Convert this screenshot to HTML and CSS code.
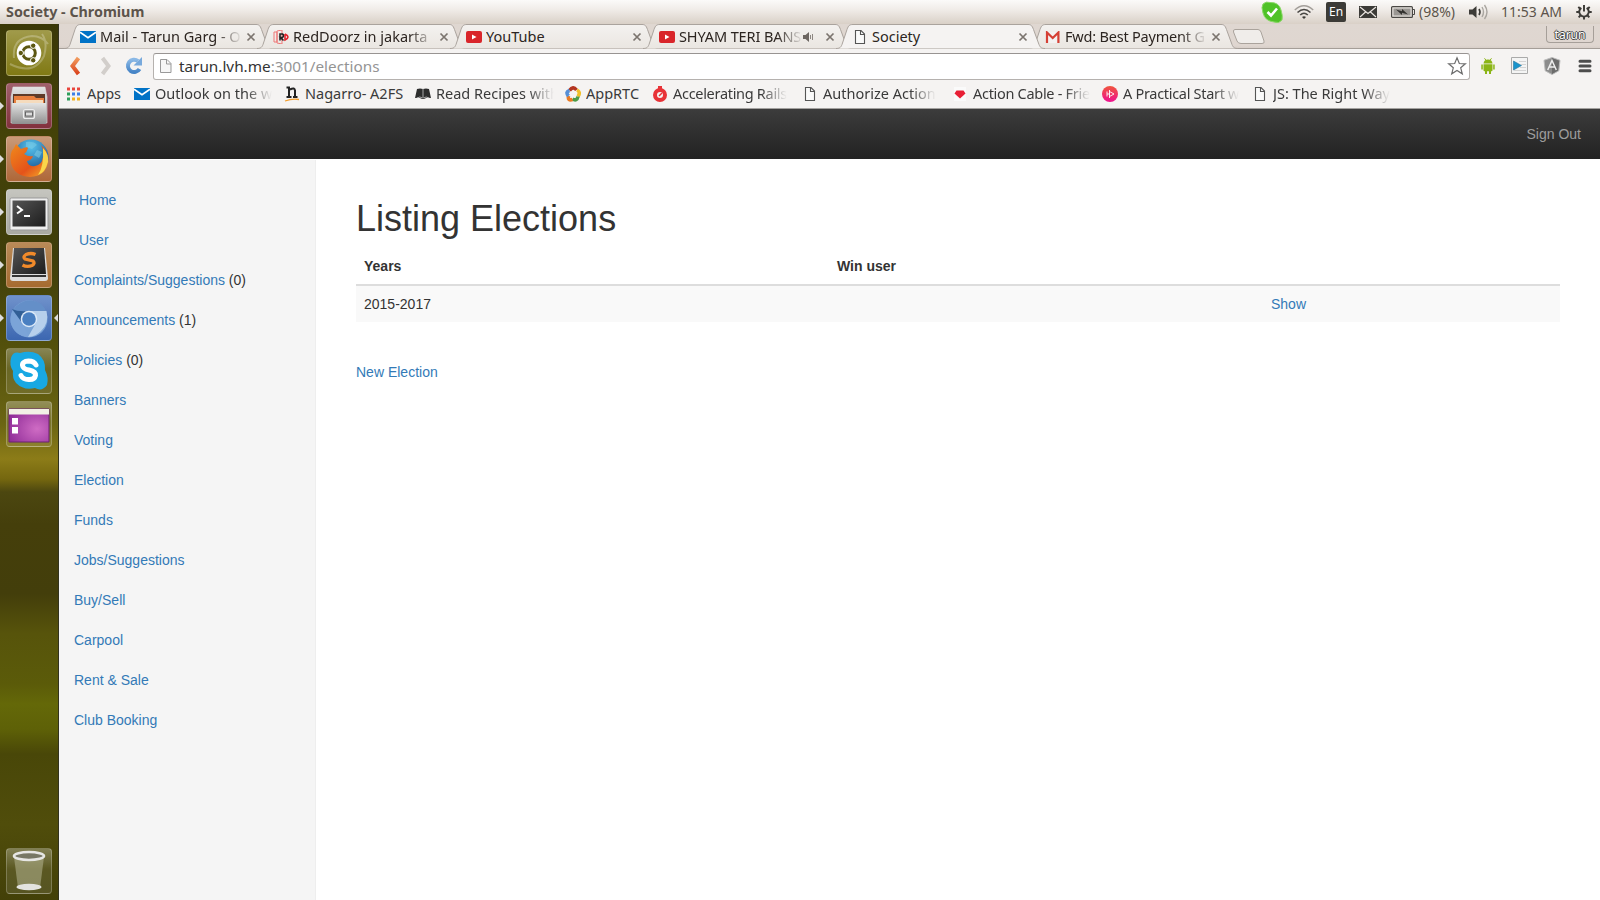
FILE: index.html
```html
<!DOCTYPE html>
<html lang="en">
<head>
<meta charset="utf-8">
<title>Society</title>
<link rel="stylesheet" href="styles.css">
</head>
<body>
<svg class="defs" width="0" height="0">
  <defs>
    <linearGradient id="tabFill" x1="0" y1="0" x2="0" y2="1"><stop offset="0" stop-color="#f4f2f0"/><stop offset="1" stop-color="#eae6e1"/></linearGradient>
    <linearGradient id="metal" x1="0" y1="0" x2="0" y2="1"><stop offset="0" stop-color="#e4e4e4"/><stop offset="1" stop-color="#8f8f8f"/></linearGradient>
    <linearGradient id="orangeArrow" x1="0" y1="0" x2="0" y2="1"><stop offset="0" stop-color="#f19a5e"/><stop offset="1" stop-color="#d9421b"/></linearGradient>
    <linearGradient id="blueArrow" x1="0" y1="0" x2="0" y2="1"><stop offset="0" stop-color="#8ab8e6"/><stop offset="1" stop-color="#4684c6"/></linearGradient>
    <linearGradient id="flame" x1="0" y1="0" x2="1" y2="1"><stop offset="0" stop-color="#f08a1c"/><stop offset=".6" stop-color="#e4531a"/><stop offset="1" stop-color="#f6b22b"/></linearGradient>
    <radialGradient id="globe" cx=".5" cy=".2" r=".8"><stop offset="0" stop-color="#58c3ec"/><stop offset="1" stop-color="#114a8c"/></radialGradient>
    <linearGradient id="screen" x1="0" y1="0" x2="1" y2="1"><stop offset="0" stop-color="#555"/><stop offset="1" stop-color="#1c1c1c"/></linearGradient>
    <radialGradient id="purple" cx=".7" cy=".6" r=".8"><stop offset="0" stop-color="#cf6cc4"/><stop offset="1" stop-color="#8d2a96"/></radialGradient>
    <linearGradient id="pink" x1="0" y1="0" x2="0" y2="1"><stop offset="0" stop-color="#f0553c"/><stop offset="1" stop-color="#ee1190"/></linearGradient>
    <symbol id="tab" viewBox="0 0 209 25"><path d="M0 24.5C4 24.5 5 23 6 20.5L11 5.500C12.500 1.500 13.500.5 17 .5H192C195 .5 196 1.500 197.500 5.500L203 20.500C204 23 205 24.500 209 24.500"/></symbol>
    <symbol id="x" viewBox="0 0 10 10"><path d="M1.500 1.500l7 7M8.500 1.500l-7 7" fill="none" stroke="#7b746e" stroke-width="1.700"/></symbol>
    <symbol id="page" viewBox="0 0 16 16"><path d="M3.500 1.500h5.500l3.500 3.500v9.500h-9z" fill="#fafafa" stroke="#555" stroke-width="1.100"/><path d="M8.500 1.500v4h4" fill="none" stroke="#555" stroke-width="1.100"/></symbol>
    <symbol id="mail" viewBox="0 0 16 12"><path d="M0 0h16v12H0z" fill="#0072c6"/><path d="M0 1.200l8 5.400 8-5.400" fill="none" stroke="#fff" stroke-width="1.700"/></symbol>
    <symbol id="yt" viewBox="0 0 16 12"><rect width="16" height="12" rx="2" fill="#d9252a"/><path d="M6 3.500l4.500 2.500L6 8.500z" fill="#fff"/></symbol>
  </defs>
</svg>

<header class="panel">
  <div class="panel-title">Society - Chromium</div>
  <div class="tray">
    <svg width="22" height="22" viewBox="0 0 22 22"><path d="M2 3Q5 0 9 1.500Q18 1 20 9Q22 15 21 19Q18 23 13 21Q4 20 2 12Q0 6 2 3z" fill="#4fc227" stroke="#8ad867"/><path d="M6.500 11l3.500 3.500 6-7" fill="none" stroke="#fff" stroke-width="2.600"/></svg>
    <svg width="20" height="16" viewBox="0 0 20 16" fill="none"><path d="M.8 6Q10-2.500 19.200 6" stroke="#a29e99" stroke-width="1.500"/><path d="M3.500 8.500Q10 2.500 16.500 8.500M6.200 11Q10 7.500 13.800 11" stroke="#4a4845" stroke-width="1.600"/><path d="M8 13Q10 11.400 12 13L10 15z" fill="#3c3b37"/></svg>
    <span class="lang">En</span>
    <svg width="18" height="12" viewBox="0 0 18 12"><path d="M0 0h18v12H0z" fill="#3c3b37"/><path d="M1 1l8 6.500L17 1M1 11l5.500-5M17 11l-5.500-5" fill="none" stroke="#eee9e4" stroke-width="1.100"/></svg>
    <svg width="24" height="12" viewBox="0 0 24 12"><rect x=".6" y=".6" width="20.800" height="10.800" rx="1" fill="#e8e4df" stroke="#4a4845" stroke-width="1.200"/><path d="M2.500 2.500h17v7h-17z" fill="#9a9793"/><path d="M22 3.500h1.500v5H22" fill="none" stroke="#4a4845"/><path d="M5 3.500l6 1.700V3l6 5.500-6-1.700v2.200z" fill="#32312e"/></svg>
    <span class="tray-text">(98%)</span>
    <svg width="20" height="16" viewBox="0 0 20 16"><path d="M0 5.500h3.500L7.500 2v12l-4-3.500H0z" fill="#3c3b37"/><path d="M10 5Q12 8 10 11" fill="none" stroke="#3c3b37" stroke-width="1.600"/><path d="M13 3Q16 8 13 13M15.500 1Q20.500 8 15.500 15" fill="none" stroke="#aaa6a0" stroke-width="1.400"/></svg>
    <span class="tray-text">11:53 AM</span>
    <svg width="16" height="18" viewBox="0 0 18 18" fill="none" stroke="#3c3b37"><path d="M6 4.300A5.400 5.400 0 1 0 12 4.300" stroke-width="2.200"/><path d="M9 1v7.500" stroke-width="2.200"/><path d="M2.600 3.300l2 2M15.400 3.300l-2 2M.3 9h3M14.700 9h3M3 15l2-2M15 15l-2-2M9 14.500v3" stroke-width="2.200"/></svg>
  </div>
</header>

<div class="desktop">
  <nav class="launcher">
    <div class="tile t-dash"><svg viewBox="0 0 46 46"><path d="M4 34Q28 46 38 26Q42 12 36 4M8 28Q6 8 26 6Q36 6 42 14" fill="none" stroke="#fff" stroke-opacity=".25" stroke-width="2"/><circle cx="23" cy="23" r="12.300" fill="#fff"/><circle cx="23" cy="23" r="6.300" fill="none" stroke="#5c5712" stroke-width="3"/><g fill="#5c5712" stroke="#fff" stroke-width="1"><circle cx="14.800" cy="23" r="2.700"/><circle cx="27.200" cy="15.700" r="2.700"/><circle cx="27.200" cy="30.300" r="2.700"/></g></svg></div>
    <div class="tile t-files running"><svg viewBox="0 0 46 46"><path d="M7 4h32l2 10v26H5V14z" fill="url(#metal)" stroke="#ddd" stroke-width=".6"/><path d="M7 11h32v9H7z" fill="#5e3a28"/><path d="M8 13h20l2 2h8v6H8z" fill="#e87f3e"/><path d="M10 17h27v4H10z" fill="#f5dbbd"/><path d="M6 20h34v21H6z" fill="url(#metal)"/><rect x="17.500" y="26.500" width="11" height="9" rx="2" fill="#aaa" stroke="#eee" stroke-width="1.200"/><rect x="19.500" y="29" width="7" height="4" fill="#ddd" stroke="#666"/></svg></div>
    <div class="tile t-firefox running"><svg viewBox="0 0 46 46"><circle cx="25" cy="21" r="17.500" fill="url(#globe)"/><path d="M20 6Q28 5 31 9L26 13L20 11zM31 14l5 2-3 6-5-3z" fill="#79c9e5" opacity=".6"/><path d="M10 8L15 13Q21 10 22 12Q21 16 18 18Q22 21 27 20Q26 24 21 25Q22 31 29 30Q36 29 37 21Q38 14 35 9Q43 15 42 26Q40 40 24 41Q8 40 5 27Q3 17 8 12z" fill="url(#flame)"/><path d="M37 12Q43 18 42 26Q39 37 32 39Q38 31 37 12" fill="#f9d54b"/></svg></div>
    <div class="tile t-term running"><svg viewBox="0 0 46 46"><rect x="4" y="9" width="38" height="32" rx="1.500" fill="#eee" stroke="#999"/><path d="M6.500 11.500h33v26h-33z" fill="url(#screen)"/><path d="M11 17l5 4-5 3.500M18 27h6" fill="none" stroke="#fff" stroke-width="2"/></svg></div>
    <div class="tile t-sublime running"><svg viewBox="0 0 46 46"><path d="M7 6h32l3 30q0 3-3 3H7q-3 0-3-3z" fill="#ddd"/><path d="M8 6h30l2 26H6z" fill="url(#screen)"/><path d="M6 33h34v2H6z" fill="#333"/><path d="M29.500 12.500Q25 10.500 20 12.500Q16.500 15 19 17L27 19Q29.500 21.500 26 23.500Q21 25.500 16.500 23" fill="none" stroke="#f18a2a" stroke-width="3.300"/></svg></div>
    <div class="tile t-chromium running active"><svg viewBox="0 0 46 46"><circle cx="23" cy="24" r="18.500" fill="#79a3d6"/><path d="M23 24L7 15Q14 5 25 5.500Q36 6 40.500 17H23z" fill="#648fc8"/><path d="M7 15L17 29L23 42Q8 41 4.500 27Q4 20 7 15z" fill="#7ba4d8"/><path d="M23 16h17.500q3 12-5.500 20-5 5.500-13 6L30.500 27z" fill="#b7d0ec"/><path d="M6 14l9.500 13 1-7 6-4Q12 17 6 14" fill="#315f96"/><circle cx="23" cy="24" r="8.300" fill="#dce9f7"/><circle cx="23" cy="24" r="6.800" fill="#497fc1"/></svg></div>
    <div class="tile t-glass"><svg viewBox="0 0 46 46"><path d="M5 10Q7 3 14 5Q24 2 32 6Q40 12 39 22Q43 30 41 37Q36 44 29 40Q18 43 10 35Q6 30 7 23Q3 17 5 10z" fill="#18a8e3"/><path d="M30 17Q28 13 22.500 13Q16 13.500 16.500 17.500Q17 21 23 22Q30 23.500 29.500 27.500Q28.500 32 22.500 31.500Q17 31.500 15 27.500" fill="none" stroke="#fff" stroke-width="5" stroke-linecap="round"/></svg></div>
    <div class="tile t-glass"><svg viewBox="0 0 46 46"><path d="M3 8h40v33H3z" fill="url(#purple)" stroke="#6a2370"/><path d="M3 8h40v5.500H3z" fill="#f2f0e6"/><path d="M6 17h6v6.500H6zM6 26h6v6.500H6z" fill="#fff"/></svg></div>
    <div class="tile t-glass trash"><svg viewBox="0 0 46 46"><path d="M8 9h30l-4 31q-11 4-22 0z" fill="#b5b591" fill-opacity=".55"/><ellipse cx="23" cy="39" rx="12.500" ry="3.200" fill="#e3e3e0"/><ellipse cx="23" cy="8" rx="15" ry="4" fill="#777765" stroke="#e6e6e3" stroke-width="2.600"/></svg></div>
  </nav>

  <div class="browser">
    <div class="tabstrip">
      <div class="tab"><svg class="shape"><use href="#tab"/></svg><svg class="fav" width="16" height="12"><use href="#mail"/></svg><span class="label fade">Mail - Tarun Garg - O</span><svg class="close"><use href="#x"/></svg></div>
      <div class="tab"><svg class="shape"><use href="#tab"/></svg><svg class="fav" width="16" height="14" viewBox="0 0 16 14"><path d="M1 2h3v10H1zM4 1l5-1v14l-5-1z" fill="none" stroke="#ee7777"/><path d="M7 10.500V4h2.500q2 1.500 0 3.500H7.500L10.500 10.500" fill="none" stroke="#222" stroke-width="1.600"/><path d="M12 4v6q6-3 0-6" fill="none" stroke="#e3202a" stroke-width="1.600"/></svg><span class="label fade">RedDoorz in jakarta</span><svg class="close"><use href="#x"/></svg></div>
      <div class="tab"><svg class="shape"><use href="#tab"/></svg><svg class="fav" width="16" height="12"><use href="#yt"/></svg><span class="label">YouTube</span><svg class="close"><use href="#x"/></svg></div>
      <div class="tab"><svg class="shape"><use href="#tab"/></svg><svg class="fav" width="16" height="12"><use href="#yt"/></svg><span class="label fade tight">SHYAM TERI BANS</span><svg class="audio" width="11" height="10" viewBox="0 0 11 10"><path d="M0 3h2.500L6 0v10L2.500 7H0z" fill="#6d6762"/><path d="M7.500 3v4M9.500 2v6" stroke="#8d8782"/></svg><svg class="close"><use href="#x"/></svg></div>
      <div class="tab current"><svg class="shape"><use href="#tab"/></svg><svg class="fav" width="16" height="16"><use href="#page"/></svg><span class="label">Society</span><svg class="close"><use href="#x"/></svg></div>
      <div class="tab"><svg class="shape"><use href="#tab"/></svg><svg class="fav" width="16" height="12" viewBox="0 0 16 12"><path d="M1 1h13v11H1z" fill="#f4f2f2"/><path d="M2 12V1.500l5.700 5.500L13.400 1.500V12" fill="none" stroke="#d54035" stroke-width="2.200"/></svg><span class="label fade gmail">Fwd: Best Payment G</span><svg class="close"><use href="#x"/></svg></div>
      <svg class="newtab" width="34" height="18" viewBox="0 0 34 18"><path d="M3 1.500H26Q28 1.500 29 4L32 13Q33 15.500 30 15.500H9Q6 15.500 5 13L1.500 4Q1 1.500 3 1.500z" fill="#f0edea" stroke="#aaa39c"/></svg>
      <div class="profile">tarun</div>
    </div>

    <div class="toolbar">
      <svg width="12" height="20" viewBox="0 0 12 20"><path d="M9.500 2L3.500 10l6 8" fill="none" stroke="url(#orangeArrow)" stroke-width="4"/></svg>
      <svg class="forward" width="12" height="20" viewBox="0 0 12 20"><path d="M2.500 2L8.500 10l-6 8" fill="none" stroke="#d2cecb" stroke-width="4"/></svg>
      <svg class="reload" width="20" height="20" viewBox="0 0 20 20"><path d="M14 5A6.200 6.200 0 1 0 15.500 13" fill="none" stroke="url(#blueArrow)" stroke-width="4"/><path d="M18 1v8.500H9.500z" fill="#78a9dc"/></svg>
      <div class="omnibox">
        <svg width="14" height="16" viewBox="0 0 14 16"><path d="M1.500 1.500h6.500l4 4v9h-10.500z" fill="#f6f6f6" stroke="#999"/><path d="M7.500 1.500v4.500H12" fill="none" stroke="#999"/></svg>
        <span class="url">tarun.lvh.me<span class="path">:3001/elections</span></span>
        <svg class="star" width="20" height="20" viewBox="0 0 20 20"><path d="M10 1.800l2.300 5.700 6.100.3-4.700 4 1.600 6-5.300-3.400-5.300 3.400 1.600-6-4.700-4 6.100-.3z" fill="#fff" stroke="#6d6d6d" stroke-width="1.200"/></svg>
      </div>
      <div class="extensions">
        <svg width="14" height="16" viewBox="0 0 14 16" fill="#8bb516"><path d="M2.500 5.500Q3 1.500 7 1.500T11.500 5.500zM2.500 6.200h9v6q0 1-1 1h-7q-1 0-1-1z"/><path d="M.3 6.500h1.500v5H.3zM12.200 6.500h1.500v5h-1.500zM4 12h2v4H4zM8 12h2v4H8z"/><path d="M3.500.3l1.500 2M10.500.3L9 2.300" stroke="#8bb516"/></svg>
        <svg width="17" height="17" viewBox="0 0 17 17"><path d="M.5.5h16v16H.5z" fill="#f4f4f4" stroke="#aaa"/><path d="M8 4.500h7M10 7.500h5M9 10.500h6M3 13.500h12" stroke="#d4d4d4"/><path d="M2.500 4l8 4.500-8 4.500z" fill="#1994cc" stroke="#26739b" stroke-width=".6"/></svg>
        <svg width="18" height="18" viewBox="0 0 18 18"><path d="M9 .5l8 2.800-1.200 10.500L9 17.500l-6.800-3.700L1 3.300z" fill="#8c8c8c" stroke="#bbb"/><path d="M9 1v16l6-3.500 1.200-9.800z" fill="#6c6c6c"/><path d="M4.700 13L9 3.500l4.300 9.500M6.500 10h5" fill="none" stroke="#eee" stroke-width="1.500"/></svg>
        <svg width="14" height="14" viewBox="0 0 14 14"><path d="M2 2.200h10M2 7h10M2 11.800h10" stroke="#4d4d4d" stroke-width="3" stroke-linecap="round"/></svg>
      </div>
    </div>

    <div class="bookmarks">
      <div class="bm"><svg viewBox="0 0 16 16"><path d="M1 1.500h3v3H1zM6 1.500h3v3H6zM11 1.500h3v3h-3z" fill="#e8453c"/><path d="M1 6.500h3v3H1zM1 11.500h3v3H1z" fill="#2f9e5b"/><path d="M6 6.500h3v3H6zM11 6.500h3v3h-3z" fill="#3c7fe6"/><path d="M6 11.500h3v3H6zM11 11.500h3v3h-3z" fill="#f2b01e"/></svg><span>Apps</span></div>
      <div class="bm"><svg viewBox="0 -2 16 16"><use href="#mail" width="16" height="12"/></svg><span class="fade">Outlook on the w</span></div>
      <div class="bm"><svg viewBox="0 0 16 16"><path d="M2.500 1.500H5v9M6 3.500Q11 .8 11 5v5.500M2.500 11h5M9 11h4.500" fill="none" stroke="#222" stroke-width="2"/><path d="M4 1h2v10H4zM10 4h2v7h-2z" fill="#222"/><path d="M1 15Q8 12.500 15 13.500" fill="none" stroke="#f29c2b" stroke-width="1.300"/></svg><span>Nagarro- A2FS</span></div>
      <div class="bm"><svg viewBox="0 0 16 16"><path d="M2 3q3-1 6 0 3-1 6 0l2 9q-4-1-7 1H7Q4 11 0 12z" fill="#2d2d2d"/><path d="M8 3v9M2 12Q5 10 7.500 12M14 12q-3-2-5.500 0" fill="none" stroke="#ddd" stroke-width=".7"/></svg><span class="fade">Read Recipes with</span></div>
      <div class="bm"><svg viewBox="0 0 16 16" fill="none" stroke-width="3.600"><path d="M4.500 4.500Q8-.5 11.500 4" stroke="#b3341f"/><path d="M12 4Q16 6 13 10.500" stroke="#f1bf29"/><path d="M13 10.500Q12 15.500 7.500 13" stroke="#4c9b45"/><path d="M7.500 13.500Q2.500 15 3.500 10" stroke="#eb7b21"/><path d="M3.500 10Q0 6 4.500 4.500" stroke="#568fd5"/></svg><span>AppRTC</span></div>
      <div class="bm"><svg viewBox="0 0 16 16"><circle cx="8" cy="9" r="5" fill="none" stroke="#e83237" stroke-width="4"/><path d="M6 0h4v3H6z" fill="#e83237"/><path d="M7 10l3-3" stroke="#e83237" stroke-width="1.500"/></svg><span class="fade snug">Accelerating Rails</span></div>
      <div class="bm"><svg><use href="#page"/></svg><span class="fade">Authorize Action</span></div>
      <div class="bm"><svg viewBox="0 0 16 16"><path d="M2 1h12v14H2z" fill="#fafafa"/><path d="M4.500 4.500h7L13.500 7.500 8 12.500 2.500 7.500z" fill="#e81f35"/></svg><span class="fade snug">Action Cable - Frie</span></div>
      <div class="bm"><svg viewBox="0 0 16 16"><circle cx="8" cy="8" r="8" fill="url(#pink)"/><path d="M5 5.500v5M7.500 4v8M7.500 5.500l4.500 2.500-4.500 2.500M5 8h3" fill="none" stroke="#fff" stroke-width=".9"/></svg><span class="fade snug">A Practical Start w</span></div>
      <div class="bm"><svg><use href="#page"/></svg><span class="fade">JS: The Right Way</span></div>
    </div>

    <div class="navbar"><a>Sign Out</a></div>
    <div class="page">
      <aside class="sidebar">
        <div class="in"><a>Home</a></div>
        <div class="in"><a>User</a></div>
        <div><a>Complaints/Suggestions</a> (0)</div>
        <div><a>Announcements</a> (1)</div>
        <div><a>Policies</a> (0)</div>
        <div><a>Banners</a></div>
        <div><a>Voting</a></div>
        <div><a>Election</a></div>
        <div><a>Funds</a></div>
        <div><a>Jobs/Suggestions</a></div>
        <div><a>Buy/Sell</a></div>
        <div><a>Carpool</a></div>
        <div><a>Rent &amp; Sale</a></div>
        <div><a>Club Booking</a></div>
      </aside>
      <main class="content">
        <h1>Listing Elections</h1>
        <table>
          <thead><tr><th class="c-years">Years</th><th class="c-win">Win user</th><th></th></tr></thead>
          <tbody><tr><td>2015-2017</td><td></td><td><a>Show</a></td></tr></tbody>
        </table>
        <a>New Election</a>
      </main>
    </div>
  </div>
</div>
</body>
</html>
```
FILE: styles.css
```css
* { box-sizing: border-box; }
body { margin: 0; width: 1600px; height: 900px; overflow: hidden; background: #fff; font-family: "Noto Sans", "Open Sans", sans-serif; }
svg { display: block; flex: none; }
.defs { position: absolute; }

.panel { height: 24px; display: flex; justify-content: space-between; background: linear-gradient(#fbfaf9, #f0ece8 40%, #d9d0c7); color: #5c544b; }
.panel-title { padding-left: 6px; font-size: 14.300px; font-weight: 700; line-height: 24px; }
.tray { display: grid; grid-template-columns: 33px 32px 33px 32px 28px 50px 32px 75px 24px; align-items: center; width: 339px; }
.lang { width: 20px; height: 20px; border-radius: 2px; background: #3c3b37; color: #fff; font-size: 12px; line-height: 20px; text-align: center; }
.tray-text { font-size: 14px; line-height: 24px; white-space: nowrap; }

.desktop { display: flex; height: 876px; }
.launcher { width: 59px; padding: 6px 7px 6px 6px; display: flex; flex-direction: column; gap: 7px; border-right: 1px solid #33331f;
  background: linear-gradient(#3a3807 0, #454308 120px, #3e3d0a 230px, #55520c 330px, #6b6513 400px, #8c7c18 435px, #75670f 455px, #4c4710 468px, #453f0b 500px, #433e0b 570px, #57540b 610px, #5b5b09 660px, #646808 680px, #5e6107 705px, #494708 730px, #504d0b 800px, #434008 876px); }
.tile { position: relative; width: 46px; height: 46px; flex: none; border-radius: 4px; border: 1px solid rgba(255,255,255,.22); }
.tile svg { width: 46px; height: 46px; margin: -1px; }
.t-dash { background: linear-gradient(#a09a4a, #807914); }
.t-files { background: linear-gradient(#a0606b, #82313d); }
.t-firefox { background: linear-gradient(#c99a79, #ae6738); }
.t-term { background: linear-gradient(#c5c5bf, #a9a9a2); }
.t-sublime { background: linear-gradient(#b98a58, #a66b30); }
.t-chromium { background: linear-gradient(#7092cb, #3c67b1); }
.t-glass { background: linear-gradient(rgba(255,255,255,.3), rgba(255,255,255,.1) 45%, rgba(255,255,255,.1)); }
.running::before { content: ""; position: absolute; left: -7px; top: 18px; border: 4px solid transparent; border-left-color: #ddd; border-right: 0; }
.active::after { content: ""; position: absolute; right: -7px; top: 18px; border: 4px solid transparent; border-right-color: #ddd; border-left: 0; }
.trash { margin-top: auto; }

.browser { width: 1541px; display: flex; flex-direction: column; }
.fade { mask-image: linear-gradient(to left, transparent, #000 26px); }
.tabstrip { height: 25px; padding-left: 5px; display: flex; background: linear-gradient(#dfd7d1, #dfd6d0 85%, #d5ccc6); box-shadow: inset 0 -1px #a59e98; }
.tab { position: relative; width: 209px; margin-right: -16px; padding-left: 16px; display: flex; align-items: center; font-size: 14.500px; color: #2c2521; flex: none; }
.shape { position: absolute; left: 0; top: 0; width: 209px; height: 25px; fill: url(#tabFill); stroke: #aaa39d; }
.tab > :not(.shape) { position: relative; }
.current { z-index: 1; }
.current .shape { fill: #f5f3f2; }
.label { width: 142px; margin-left: 4px; padding-bottom: 2px; overflow: hidden; white-space: nowrap; line-height: 22px; }
.label.tight { width: 124px; letter-spacing: -.1px; }
.gmail { letter-spacing: -.2px; }
.audio { margin-right: 7px; }
.close { width: 10px; height: 10px; margin-left: 4px; }
.newtab { margin: 4px 0 0 10px; }
.profile { width: 48px; height: 17px; margin: 2px 6px 0 auto; border: 1px solid #a69f99; border-top: 0; border-radius: 0 0 4px 4px; font-size: 12px; line-height: 17px; text-align: center; color: #fff; text-shadow: 1px 0 #444, -1px 0 #444, 0 1px #444, 0 -1px #444; }

.toolbar { height: 33px; display: flex; align-items: center; background: #f5f3f2; padding: 0 8px 0 10px; }
.forward { margin-left: 19px; }
.reload { margin-left: 12px; }
.omnibox { width: 1317px; height: 27px; margin: 1px 0 0 9px; border: 1px solid #b5b1ae; border-top-color: #989492; border-radius: 3px; background: #fff; display: flex; align-items: center; padding: 0 2px 0 5px; }
.url { margin-left: 6px; font-size: 15.300px; line-height: 25px; color: #333; white-space: nowrap; }
.path { color: #949494; }
.star { margin-left: auto; }
.extensions { display: grid; grid-template-columns: 30px 32px 35px 14px; align-items: center; margin-left: auto; }

.bookmarks { height: 27px; padding: 0 0 3px 7px; display: grid; grid-template-columns: 68px 150px 131px 150px 87px 150px 150px 150px 150px 150px; background: #f5f3f2; border-bottom: 1px solid #a3a19f; }
.bm { display: flex; align-items: center; font-size: 14.500px; color: #3a3a3a; }
.bm svg { width: 16px; height: 16px; }
.bm span { margin-left: 5px; max-width: 118px; overflow: hidden; white-space: nowrap; line-height: 23px; }
.bm .snug { letter-spacing: -.3px; }

.navbar, .page { font-family: "Liberation Sans", Arial, sans-serif; font-size: 14px; line-height: 20px; color: #333; }
.navbar { height: 50px; padding: 15px 19px; text-align: right; background: linear-gradient(#3c3c3c, #222); color: #9d9d9d; }
.page { flex: 1; display: flex; border-top: 1px solid #fff; }
.page a { color: #337ab7; }
.sidebar { width: 257px; padding: 30px 15px; background: #f5f5f5; border-right: 1px solid #eee; display: flex; flex-direction: column; gap: 20px; }
.in { padding-left: 5px; }
.content { flex: 1; padding: 39px 40px 0; }
h1 { margin: 0 0 10px; font-size: 36px; font-weight: 500; line-height: 39px; }
table { width: 1204px; border-collapse: collapse; table-layout: fixed; margin-bottom: 40px; }
th, td { padding: 8px; text-align: left; }
th { border-bottom: 2px solid #ddd; }
td { background: #f9f9f9; }
.c-years { width: 473px; }
.c-win { width: 434px; }
```
